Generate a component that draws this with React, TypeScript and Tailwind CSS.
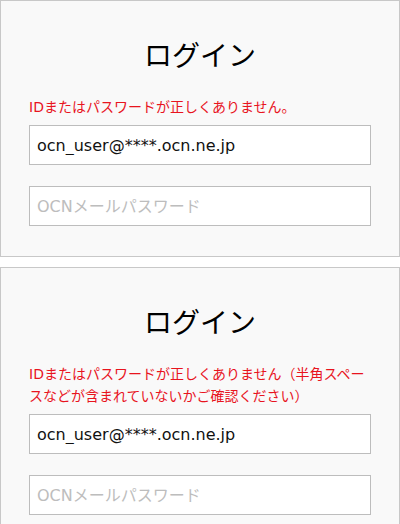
const font = { fontFamily: '"DejaVu Sans", "Noto Sans CJK JP", sans-serif' };

function LoginPanel({ error }: { error: string }) {
  return (
    <section className="border border-[#c8c8c8] bg-[#f9f9f9] px-[28px] pt-[35px] pb-[30px]">
      <h1 className="text-center text-[28px] leading-[42px] font-normal text-black">
        ログイン
      </h1>
      <p className="mt-[18px] text-[14px] leading-[22px] text-[#e8141e]">{error}</p>
      <input
        type="text"
        readOnly
        value="ocn_user@****.ocn.ne.jp"
        className="mt-[7px] block h-[40px] w-full border border-[#bdbdbd] bg-white pl-[7px] text-[16px] text-[#111] outline-none"
        style={font}
      />
      <input
        type="password"
        placeholder="OCNメールパスワード"
        className="mt-[21px] block h-[40px] w-full border border-[#bdbdbd] bg-white pl-[7px] text-[16px] text-[#111] outline-none placeholder:text-[#bdbdbd]"
        style={font}
      />
    </section>
  );
}

export default function App() {
  return (
    <div className="flex w-[400px] flex-col gap-[10px] bg-white" style={font}>
      <LoginPanel error="IDまたはパスワードが正しくありません。" />
      <LoginPanel error="IDまたはパスワードが正しくありません（半角スペースなどが含まれていないかご確認ください）" />
    </div>
  );
}
